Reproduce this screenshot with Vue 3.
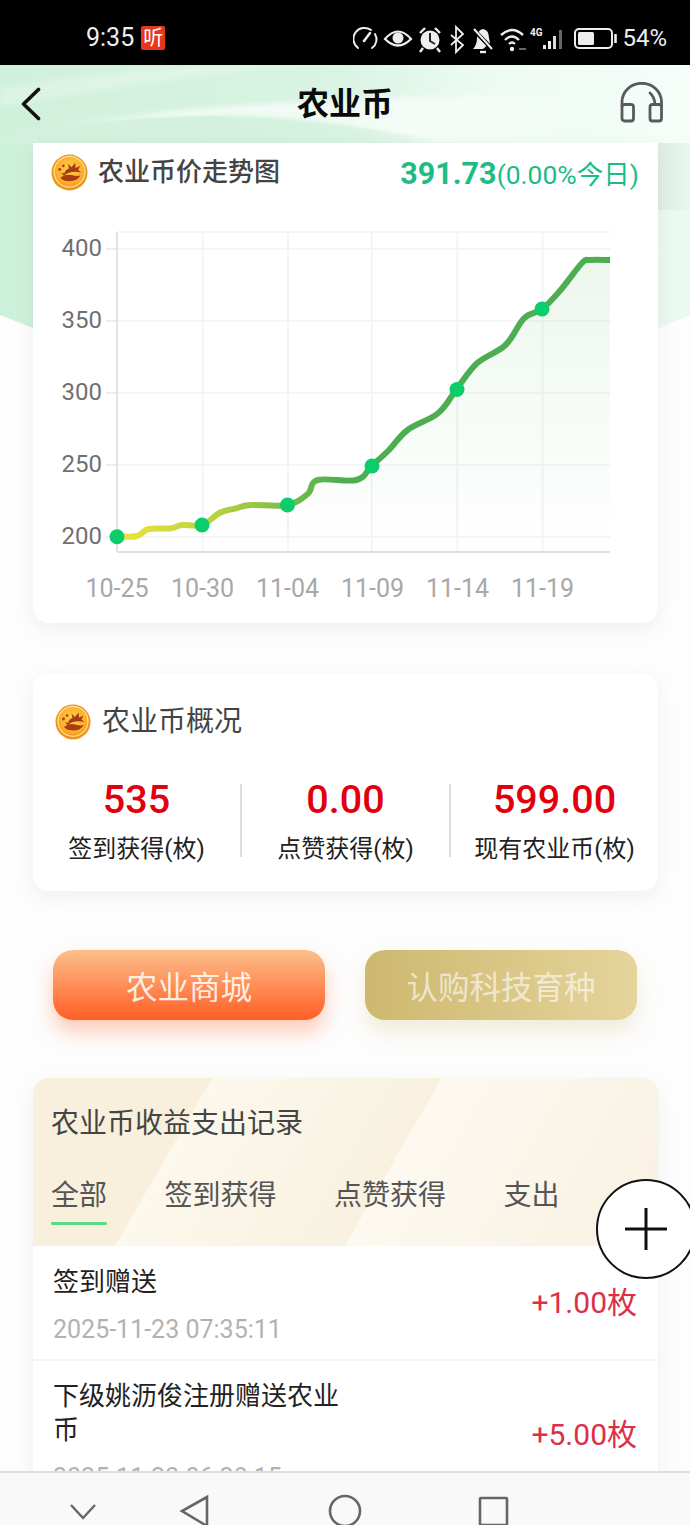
<script setup>
const pts = [[117,536.7],[137,536],[148.4,529],[170.8,528.3],[181.8,525],[202.7,524.7],[219.8,512.7],[236,508.3],[250.4,505],[287,505],[307.6,494],[317.8,480],[356.5,480],[371.6,466],[389,450],[407.6,430],[438,413.3],[456.5,389.3],[477,363.3],[505.5,345],[524,318.3],[542.2,309],[560.6,290],[582,263],[590,260],[610,260]]

function smooth(p) {
  let d = `M${p[0][0]} ${p[0][1]}`
  for (let i = 0; i < p.length - 1; i++) {
    const a = p[i - 1] || p[i], b = p[i], c = p[i + 1], e = p[i + 2] || c
    const t = 0.18
    d += ` C${(b[0] + (c[0] - a[0]) * t).toFixed(1)} ${(b[1] + (c[1] - a[1]) * t).toFixed(1)} ${(c[0] - (e[0] - b[0]) * t).toFixed(1)} ${(c[1] - (e[1] - b[1]) * t).toFixed(1)} ${c[0]} ${c[1]}`
  }
  return d
}
const linePath = smooth(pts)
const areaPath = linePath + ' L610 552 L117 552 Z'

const gridY = [232, 249, 321, 393, 465, 537]
const gridX = [202.7, 288, 371.6, 457.3, 542.6]
const yLabels = [['400', 249], ['350', 321], ['300', 393], ['250', 465], ['200', 537]]
const xLabels = [['10-25', 117], ['10-30', 202.5], ['11-04', 287.5], ['11-09', 372.5], ['11-14', 457.5], ['11-19', 542.5]]
const dots = [[117, 536.7], [202, 525], [287.5, 505], [372, 466], [457, 389.5], [542, 309]]

const stats = [
  { value: '535', label: '签到获得(枚)' },
  { value: '0.00', label: '点赞获得(枚)' },
  { value: '599.00', label: '现有农业币(枚)' }
]
const tabs = ['全部', '签到获得', '点赞获得', '支出']
</script>

<template>
  <div class="screen">
    <header class="status">
      <div class="status-left">
        <span class="clock">9:35</span>
        <span class="listen">听</span>
      </div>
      <div class="status-right">
        <svg class="status-icons" width="270" height="45" viewBox="15 0 270 45" fill="none" stroke="#eee" stroke-width="2">
          <path d="M20 32 A10.5 10.5 0 0 1 33 14" stroke-linecap="round"/>
          <path d="M37 18 A10.5 10.5 0 0 1 34 32" stroke-linecap="round"/>
          <path d="M26 25 L32 17" stroke-width="2.5" stroke-linecap="round"/>
          <path d="M47 23 Q60 8 73 23 Q60 36 47 23 Z" stroke-width="2.2"/>
          <circle cx="60" cy="22" r="5.5" fill="#eee" stroke="none"/>
          <circle cx="92" cy="24" r="9.5" fill="#eee" stroke="none"/>
          <path d="M92 17 V25 L97 28" stroke="#222" stroke-width="2"/>
          <path d="M82 17 L87 12 M102 17 L97 12 M85 32 L82 36 M99 32 L102 36" stroke-width="2.4"/>
          <path d="M113 19 L125 29 L118 36 V11 L125 18 L113 29" stroke-width="1.8"/>
          <path d="M145 33 H135 Q139 29 139 22 Q139 14 145 13 Q151 14 151 22 L152 27 Z" fill="#eee" stroke="none"/>
          <path d="M142 36 H148" stroke-width="2.4"/>
          <path d="M135 13 L155 34" stroke="#000" stroke-width="4"/>
          <path d="M136 13 L154 33" stroke-width="2"/>
          <path d="M163 19 Q174 9 185 19" stroke-width="2.4"/>
          <path d="M167 24 Q174 17 181 24" stroke-width="2.4"/>
          <path d="M171 28 Q174 25 177 28" stroke-width="2.2"/>
          <circle cx="174" cy="33" r="2.2" fill="#eee" stroke="none"/>
          <path d="M181 33 H188" stroke-width="1.5" stroke="#888"/>
          <text x="192" y="20" class="net">4G</text>
          <rect x="205" y="29" width="3" height="4" fill="#eee" stroke="none"/>
          <rect x="210" y="25" width="3" height="8" fill="#eee" stroke="none"/>
          <rect x="215" y="20" width="3" height="13" fill="#ddd" stroke="none"/>
          <rect x="221" y="14" width="3" height="19" fill="#666" stroke="none"/>
          <rect x="237" y="13" width="37" height="19" rx="4" stroke-width="2"/>
          <rect x="240" y="16" width="16" height="13" rx="1.5" fill="#eee" stroke="none"/>
          <path d="M277.5 18 V27" stroke-width="2.6"/>
        </svg>
        <span class="pct">54%</span>
      </div>
    </header>

    <main class="viewport">
      <svg class="backdrop" width="690" height="290" viewBox="0 65 690 290">
        <defs>
          <linearGradient id="bgGreen" x1="0" y1="0" x2="1" y2="0">
            <stop offset="0" stop-color="#cff0db"/>
            <stop offset="0.5" stop-color="#daf4e4"/>
            <stop offset="0.72" stop-color="#eefbf3"/>
            <stop offset="1" stop-color="#f5fdf8"/>
          </linearGradient>
          <linearGradient id="belowGreen" x1="0" y1="0" x2="1" y2="0">
            <stop offset="0" stop-color="#cdf0da"/>
            <stop offset="1" stop-color="#ebfaf1"/>
          </linearGradient>
          <linearGradient id="swoosh" gradientUnits="userSpaceOnUse" x1="0" y1="0" x2="690" y2="0">
            <stop offset="0" stop-color="#fff" stop-opacity="0.1"/>
            <stop offset="0.25" stop-color="#fff" stop-opacity="0.7"/>
            <stop offset="0.6" stop-color="#fff" stop-opacity="0.6"/>
            <stop offset="0.85" stop-color="#fff" stop-opacity="0"/>
          </linearGradient>
          <linearGradient id="wave" gradientUnits="userSpaceOnUse" x1="0" y1="0" x2="460" y2="0">
            <stop offset="0" stop-color="#d3f1de" stop-opacity="0.6"/>
            <stop offset="0.45" stop-color="#d3f1de"/>
            <stop offset="1" stop-color="#d3f1de" stop-opacity="0"/>
          </linearGradient>
          <linearGradient id="sideShade" x1="0" y1="0" x2="1" y2="0">
            <stop offset="0" stop-color="#000" stop-opacity="0.05"/>
            <stop offset="1" stop-color="#000" stop-opacity="0.015"/>
          </linearGradient>
          <filter id="soft" x="-5%" y="-20%" width="110%" height="140%">
            <feGaussianBlur stdDeviation="2.5"/>
          </filter>
        </defs>
        <path d="M0 65 H690 V315 L660 328 H33 L0 315 Z" fill="url(#belowGreen)"/>
        <rect x="0" y="65" width="690" height="78" fill="url(#bgGreen)"/>
        <path d="M0 136 Q140 108 345 100 Q450 94 590 96 V143 H430 Q310 112 210 116 Q100 118 0 136 Z" fill="url(#swoosh)" filter="url(#soft)"/>
        <path d="M0 88 Q100 72 215 65 H300 Q140 80 0 108 Z" fill="#fff" opacity="0.25" filter="url(#soft)"/>
        <path d="M0 136 Q100 118 210 116 Q320 118 460 143 H0 Z" fill="url(#wave)"/>
        <rect x="658" y="143" width="32" height="67" fill="url(#sideShade)"/>
      </svg>

      <nav class="topbar">
        <svg class="back" width="20" height="34" viewBox="0 0 20 34" fill="none" stroke="#111" stroke-width="3.6" stroke-linecap="round" stroke-linejoin="round">
          <path d="M17.5 2.5 L2.5 17 L17.5 31.5"/>
        </svg>
        <h1 class="page-title">农业币</h1>
        <svg class="support" width="44" height="41" viewBox="0 0 44 41" fill="none" stroke="#5a5a5a" stroke-width="2.8" stroke-linecap="round" stroke-linejoin="round">
          <path d="M2 24 V20 A19.5 18.5 0 0 1 41.5 20 V24"/>
          <path d="M30 11 Q34.5 15 35 22"/>
          <rect x="2" y="22.5" width="11.5" height="16.5" rx="2.5"/>
          <rect x="30" y="22.5" width="11.5" height="16.5" rx="2.5"/>
        </svg>
      </nav>

      <div class="content">
        <section class="card chart-card">
          <div class="chart-head">
            <div class="head-left">
              <svg class="coin" width="37" height="37" viewBox="0 0 36 36">
                <defs>
                  <radialGradient id="coinA" cx="50%" cy="42%" r="60%">
                    <stop offset="0" stop-color="#ffcf4a"/>
                    <stop offset="0.7" stop-color="#fdb02c"/>
                    <stop offset="1" stop-color="#f3951a"/>
                  </radialGradient>
                  <g id="coinBody">
                    <circle cx="18" cy="18" r="17.5" fill="#ef9417"/>
                    <circle cx="18" cy="17.3" r="15" fill="url(#coinA)" stroke="#fee39a" stroke-width="1.2"/>
                    <path d="M10 18 L13 19 Q14 15 17.5 14 L16.5 9.5 L20 13 L23.5 8.5 L24 13.5 L28.5 11.5 L26.5 15.5 L29.5 18 Q24 17 20.5 17.5 Q15.5 18 12.5 21.5 Z" fill="#a63c12"/>
                    <path d="M9 23 Q14 19 20 20.5 Q25 22 28.5 21 Q26 26.5 18 26.5 Q12 26.5 9 23 Z" fill="#a63c12"/>
                    <circle cx="8.5" cy="15" r="1.4" fill="#a63c12"/>
                    <circle cx="12" cy="11.5" r="1.3" fill="#a63c12"/>
                  </g>
                </defs>
                <use href="#coinBody"/>
              </svg>
              <h2 class="chart-title">农业币价走势图</h2>
            </div>
            <div class="price">
              <span class="price-value">391.73</span><span class="price-change">(0.00%今日)</span>
            </div>
          </div>
          <svg class="chart" width="625" height="422" viewBox="33 201 625 422">
            <defs>
              <linearGradient id="lineGrad" gradientUnits="userSpaceOnUse" x1="117" y1="0" x2="340" y2="0">
                <stop offset="0" stop-color="#efe43f"/>
                <stop offset="0.45" stop-color="#b5d140"/>
                <stop offset="1" stop-color="#4cae50"/>
              </linearGradient>
              <linearGradient id="areaGrad" x1="0" y1="0" x2="0" y2="1">
                <stop offset="0" stop-color="#4cae50" stop-opacity="0.1"/>
                <stop offset="1" stop-color="#4cae50" stop-opacity="0"/>
              </linearGradient>
            </defs>
            <line v-for="y in gridY" :key="y" x1="117" x2="610" :y1="y" :y2="y" stroke="#f5f5f5" stroke-width="2"/>
            <line v-for="x in gridX" :key="x" :x1="x" :x2="x" y1="232" y2="552" stroke="#f4f4f4" stroke-width="2"/>
            <line v-for="y in gridY.slice(1)" :key="'t' + y" x1="106" x2="117" :y1="y" :y2="y" stroke="#ececec" stroke-width="2"/>
            <line x1="117" x2="117" y1="232" y2="552" stroke="#e2e2e2" stroke-width="2"/>
            <line x1="117" x2="610" y1="552" y2="552" stroke="#e0e0e0" stroke-width="2"/>
            <path :d="areaPath" fill="url(#areaGrad)"/>
            <path :d="linePath" fill="none" stroke="url(#lineGrad)" stroke-width="6" stroke-linejoin="round"/>
            <circle v-for="d in dots" :key="d[0]" :cx="d[0]" :cy="d[1]" r="7.5" fill="#0ccd6c"/>
            <text v-for="l in yLabels" :key="l[0]" x="102" :y="l[1] + 7" text-anchor="end" class="y-label">{{ l[0] }}</text>
            <text v-for="l in xLabels" :key="l[0]" :x="l[1]" y="597" text-anchor="middle" class="x-label">{{ l[0] }}</text>
          </svg>
        </section>

        <section class="card overview">
          <div class="overview-head">
            <svg class="coin" width="36" height="36" viewBox="0 0 36 36">
              <use href="#coinBody"/>
            </svg>
            <h2 class="overview-title">农业币概况</h2>
          </div>
          <div class="stats">
            <div v-for="s in stats" :key="s.label" class="stat">
              <div class="stat-value">{{ s.value }}</div>
              <div class="stat-label">{{ s.label }}</div>
            </div>
          </div>
        </section>

        <div class="actions">
          <button class="action action-shop">农业商城</button>
          <button class="action action-seed">认购科技育种</button>
        </div>

        <section class="card records">
          <div class="records-head">
            <h2 class="records-title">农业币收益支出记录</h2>
            <div class="tabs">
              <span v-for="(t, i) in tabs" :key="t" class="tab" :class="{ active: i === 0 }">{{ t }}</span>
            </div>
          </div>
          <div class="row row-one">
            <div class="row-main">
              <div class="row-name">签到赠送</div>
              <div class="row-date">2025-11-23 07:35:11</div>
            </div>
            <div class="row-amount">+1.00枚</div>
          </div>
          <div class="row row-two">
            <div class="row-main">
              <div class="row-name">下级姚沥俊注册赠送农业币</div>
              <div class="row-date">2025-11-23 06:28:15</div>
            </div>
            <div class="row-amount">+5.00枚</div>
          </div>
        </section>
      </div>

      <button class="fab" aria-label="add">
        <svg width="44" height="44" viewBox="0 0 44 44" stroke="#111" stroke-width="3">
          <path d="M1 22 H43 M22 1 V43"/>
        </svg>
      </button>
    </main>

    <footer class="sysnav">
      <svg width="690" height="54" viewBox="0 1471 690 54" fill="none" stroke="#666" stroke-width="2.6">
        <path d="M71 1505 L83 1518 L95 1505" stroke-width="2.4"/>
        <path d="M207 1497 L182 1511 L207 1526 Z"/>
        <ellipse cx="345" cy="1511" rx="15" ry="15"/>
        <rect x="480" y="1498" width="27" height="27" rx="1"/>
      </svg>
    </footer>
  </div>
</template>

<style>
html, body { margin: 0; padding: 0; overflow: hidden; background: #fdfdfd; }
</style>

<style scoped>
.screen {
  width: 690px;
  height: 1525px;
  display: flex;
  flex-direction: column;
  overflow: hidden;
  font-family: Roboto, "Noto Sans CJK SC", sans-serif;
  background: #fdfdfd;
}
h1, h2 { margin: 0; font-weight: 400; }

.status {
  height: 65px;
  flex: none;
  background: #000;
  display: flex;
  justify-content: space-between;
  align-items: center;
  color: #eee;
  padding: 11px 23px 0 86px;
  box-sizing: border-box;
}
.status-left { display: flex; align-items: center; gap: 7px; }
.clock { font-size: 25px; line-height: 30px; }
.listen {
  width: 24px; height: 24px; border-radius: 2px; background: #e8361a; color: #fff;
  font-size: 20px; line-height: 24px; text-align: center;
}
.status-right { display: flex; align-items: center; }
.status-icons { display: block; margin-right: -1px; }
.net { font-size: 10px; font-weight: 700; fill: #eee; stroke: none; }
.pct { font-size: 24px; line-height: 30px; }

.viewport {
  position: relative;
  flex: 1;
  min-height: 0;
  overflow: hidden;
  display: flex;
  flex-direction: column;
}
.backdrop { position: absolute; left: 0; top: 0; display: block; }

.topbar {
  position: relative;
  height: 78px;
  flex: none;
  display: flex;
  align-items: center;
  justify-content: space-between;
  padding: 0 26px 0 21px;
  box-sizing: border-box;
}
.back { display: block; }
.page-title {
  font-size: 32px; font-weight: 700; color: #0a0a0a; line-height: 40px;
  position: absolute; left: 0; right: 0; text-align: center; top: 19px;
}
.support { display: block; margin-top: -3px; }

.content {
  position: relative;
  padding: 0 32px 0 33px;
  display: flex;
  flex-direction: column;
}
.card {
  background: #fff;
  box-shadow: 0 6px 20px rgba(0, 0, 0, 0.06);
  border-radius: 16px;
}
.chart-card { border-radius: 0 0 16px 16px; height: 480px; flex: none; }
.chart-head {
  height: 58px;
  display: flex;
  align-items: center;
  justify-content: space-between;
  padding: 0 19px 0 18px;
}
.head-left { display: flex; align-items: center; gap: 10px; }
.coin { display: block; flex: none; }
.chart-title { font-size: 26px; font-weight: 500; color: #444; line-height: 36px; }
.price { color: #1cbd85; white-space: nowrap; display: flex; align-items: baseline; }
.price-value { font-size: 30.5px; font-weight: 700; }
.price-change { font-size: 26.5px; }
.chart { display: block; }
.y-label { font-size: 24px; fill: #707070; font-family: Roboto, sans-serif; }
.x-label { font-size: 25px; fill: #a8a8a8; font-family: Roboto, sans-serif; }

.overview { margin-top: 50px; height: 218px; flex: none; padding: 31px 0 0 22px; box-sizing: border-box; }
.overview-head { display: flex; align-items: center; gap: 11px; }
.overview-title { font-size: 28px; color: #444; line-height: 36px; }
.stats { display: flex; margin: 44px 0 0 -22px; }
.stat { flex: 1; text-align: center; height: 73px; border-left: 2px solid #ddd; }
.stat:first-child { border-left: none; }
.stat-value { font-size: 39.5px; font-weight: 500; color: #e2000f; line-height: 32px; }
.stat-label { font-size: 24px; color: #222; line-height: 34px; margin-top: 16px; white-space: nowrap; }

.actions { display: flex; justify-content: space-between; margin: 59px 21px 0 20px; flex: none; }
.action {
  width: 272px; height: 70px; border: none; border-radius: 20px;
  font-family: inherit; font-size: 31.5px; padding: 0;
}
.action-shop {
  background: linear-gradient(180deg, #fdbf8c, #ff5e24);
  color: rgba(255, 255, 255, 0.85);
  box-shadow: 0 12px 20px rgba(255, 100, 40, 0.32);
}
.action-seed {
  background: linear-gradient(90deg, #cdb86e, #e5d49c);
  color: rgba(255, 255, 255, 0.62);
  box-shadow: 0 12px 20px rgba(205, 185, 110, 0.24);
}

.records { margin-top: 58px; border-radius: 16px 16px 0 0; flex: none; }
.records-head {
  height: 168px;
  box-sizing: border-box;
  padding: 27px 0 0 18px;
  border-radius: 16px 16px 0 0;
  background: linear-gradient(120deg,
    #f8f0dc 0, #f8f0dc 155px,
    #fcf8ec 155px, #f8f1e0 354px,
    #fdf9f0 354px, #f8f1e2 100%);
}
.records-title { font-size: 28px; color: #444; line-height: 38px; }
.tabs { display: flex; margin-top: 34px; position: relative; }
.tab { font-size: 28px; color: #555; line-height: 38px; margin-right: 57.5px; position: relative; white-space: nowrap; }
.tab.active::after {
  content: ""; position: absolute; left: 0; right: 0; bottom: -10px; height: 3.5px;
  background: #5ad98a; border-radius: 2px;
}
.row {
  display: flex; justify-content: space-between; align-items: center;
  padding: 0 21px 0 20px;
  box-sizing: border-box;
}
.row-one { height: 115px; border-bottom: 2px solid #f5f5f5; }
.row-main { width: 300px; }
.row-name { font-size: 26px; color: #222; line-height: 34px; }
.row-date { font-size: 25px; color: #b2b2b2; line-height: 30px; margin-top: 16px; white-space: nowrap; }
.row-amount { font-size: 30px; color: #dc2f48; line-height: 40px; white-space: nowrap; }
.row-one .row-main { margin-top: 4px; }
.row-two { padding-top: 18px; align-items: flex-start; }
.row-two .row-amount { margin-top: 36px; }

.fab {
  position: absolute; left: 596px; top: 1114px;
  width: 100px; height: 100px; border-radius: 50%;
  border: 2px solid #111; background: #fff; padding: 0;
  display: flex; align-items: center; justify-content: center;
  box-sizing: border-box;
}
.fab svg { display: block; }

.sysnav {
  position: relative;
  height: 54px; flex: none;
  background: #f9f9f9;
  box-shadow: inset 0 2px 0 #dedede;
}
.sysnav svg { display: block; }
</style>
